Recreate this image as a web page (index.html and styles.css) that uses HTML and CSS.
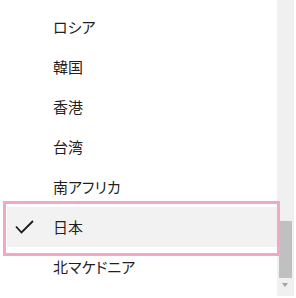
FILE: index.html
```html
<!DOCTYPE html>
<html lang="ja">
<head>
    <meta charset="UTF-8">
    <meta name="viewport" content="width=device-width, initial-scale=1.0">
    <title>国・地域の選択</title>
    <link rel="stylesheet" href="styles.css">
</head>
<body>
    <div class="picker">
        <ul class="list">
            <li class="item">ロシア</li>
            <li class="item">韓国</li>
            <li class="item">香港</li>
            <li class="item">台湾</li>
            <li class="item">南アフリカ</li>
            <li class="item selected">
                <svg class="check" width="19" height="14" viewBox="0 0 19 14">
                    <path d="M1 6.5 L6.5 12.5 L18 1" fill="none" stroke="#1a1a1a" stroke-width="1.8"/>
                </svg>
                日本
            </li>
            <li class="item">北マケドニア</li>
        </ul>
        <div class="scrollbar">
            <div class="thumb"></div>
            <div class="arrow"></div>
        </div>
    </div>
</body>
</html>
```

FILE: styles.css
```css
html, body {
    margin: 0;
    padding: 0;
    background: #ffffff;
}

body {
    font-family: "Noto Sans CJK JP", "Noto Sans", sans-serif;
    color: #1f1f1f;
}

.picker {
    display: flex;
    width: 296px;
    height: 298px;
    overflow: hidden;
}

.list {
    position: relative;
    z-index: 1;
    list-style: none;
    margin: 0;
    padding: 7px 0 0 7px;
    width: 270px;
}

.item {
    position: relative;
    height: 40px;
    line-height: 40px;
    padding-left: 46px;
    font-size: 15px;
    font-feature-settings: "palt";
}

.selected {
    background: #f2f2f2;
}

/* focus ring sits a little outside the row */
.selected::after {
    content: "";
    position: absolute;
    top: -6px;
    bottom: -9px;
    left: -4px;
    right: -3px;
    border: 3px solid #f4a6c7;
}

.check {
    position: absolute;
    left: 8px;
    top: 13px;
}

.scrollbar {
    position: relative;
    width: 17px;
    height: 296px;
    background: #f0f0f0;
    margin-right: 2px;
}

.thumb {
    position: absolute;
    left: 2px;
    top: 221px;
    width: 13px;
    height: 57px;
    background: #c0c0c0;
}

.arrow {
    position: absolute;
    left: 5px;
    top: 283px;
    width: 0;
    height: 0;
    border-left: 3.5px solid transparent;
    border-right: 3.5px solid transparent;
    border-top: 4px solid #a3a3a3;
}
```
